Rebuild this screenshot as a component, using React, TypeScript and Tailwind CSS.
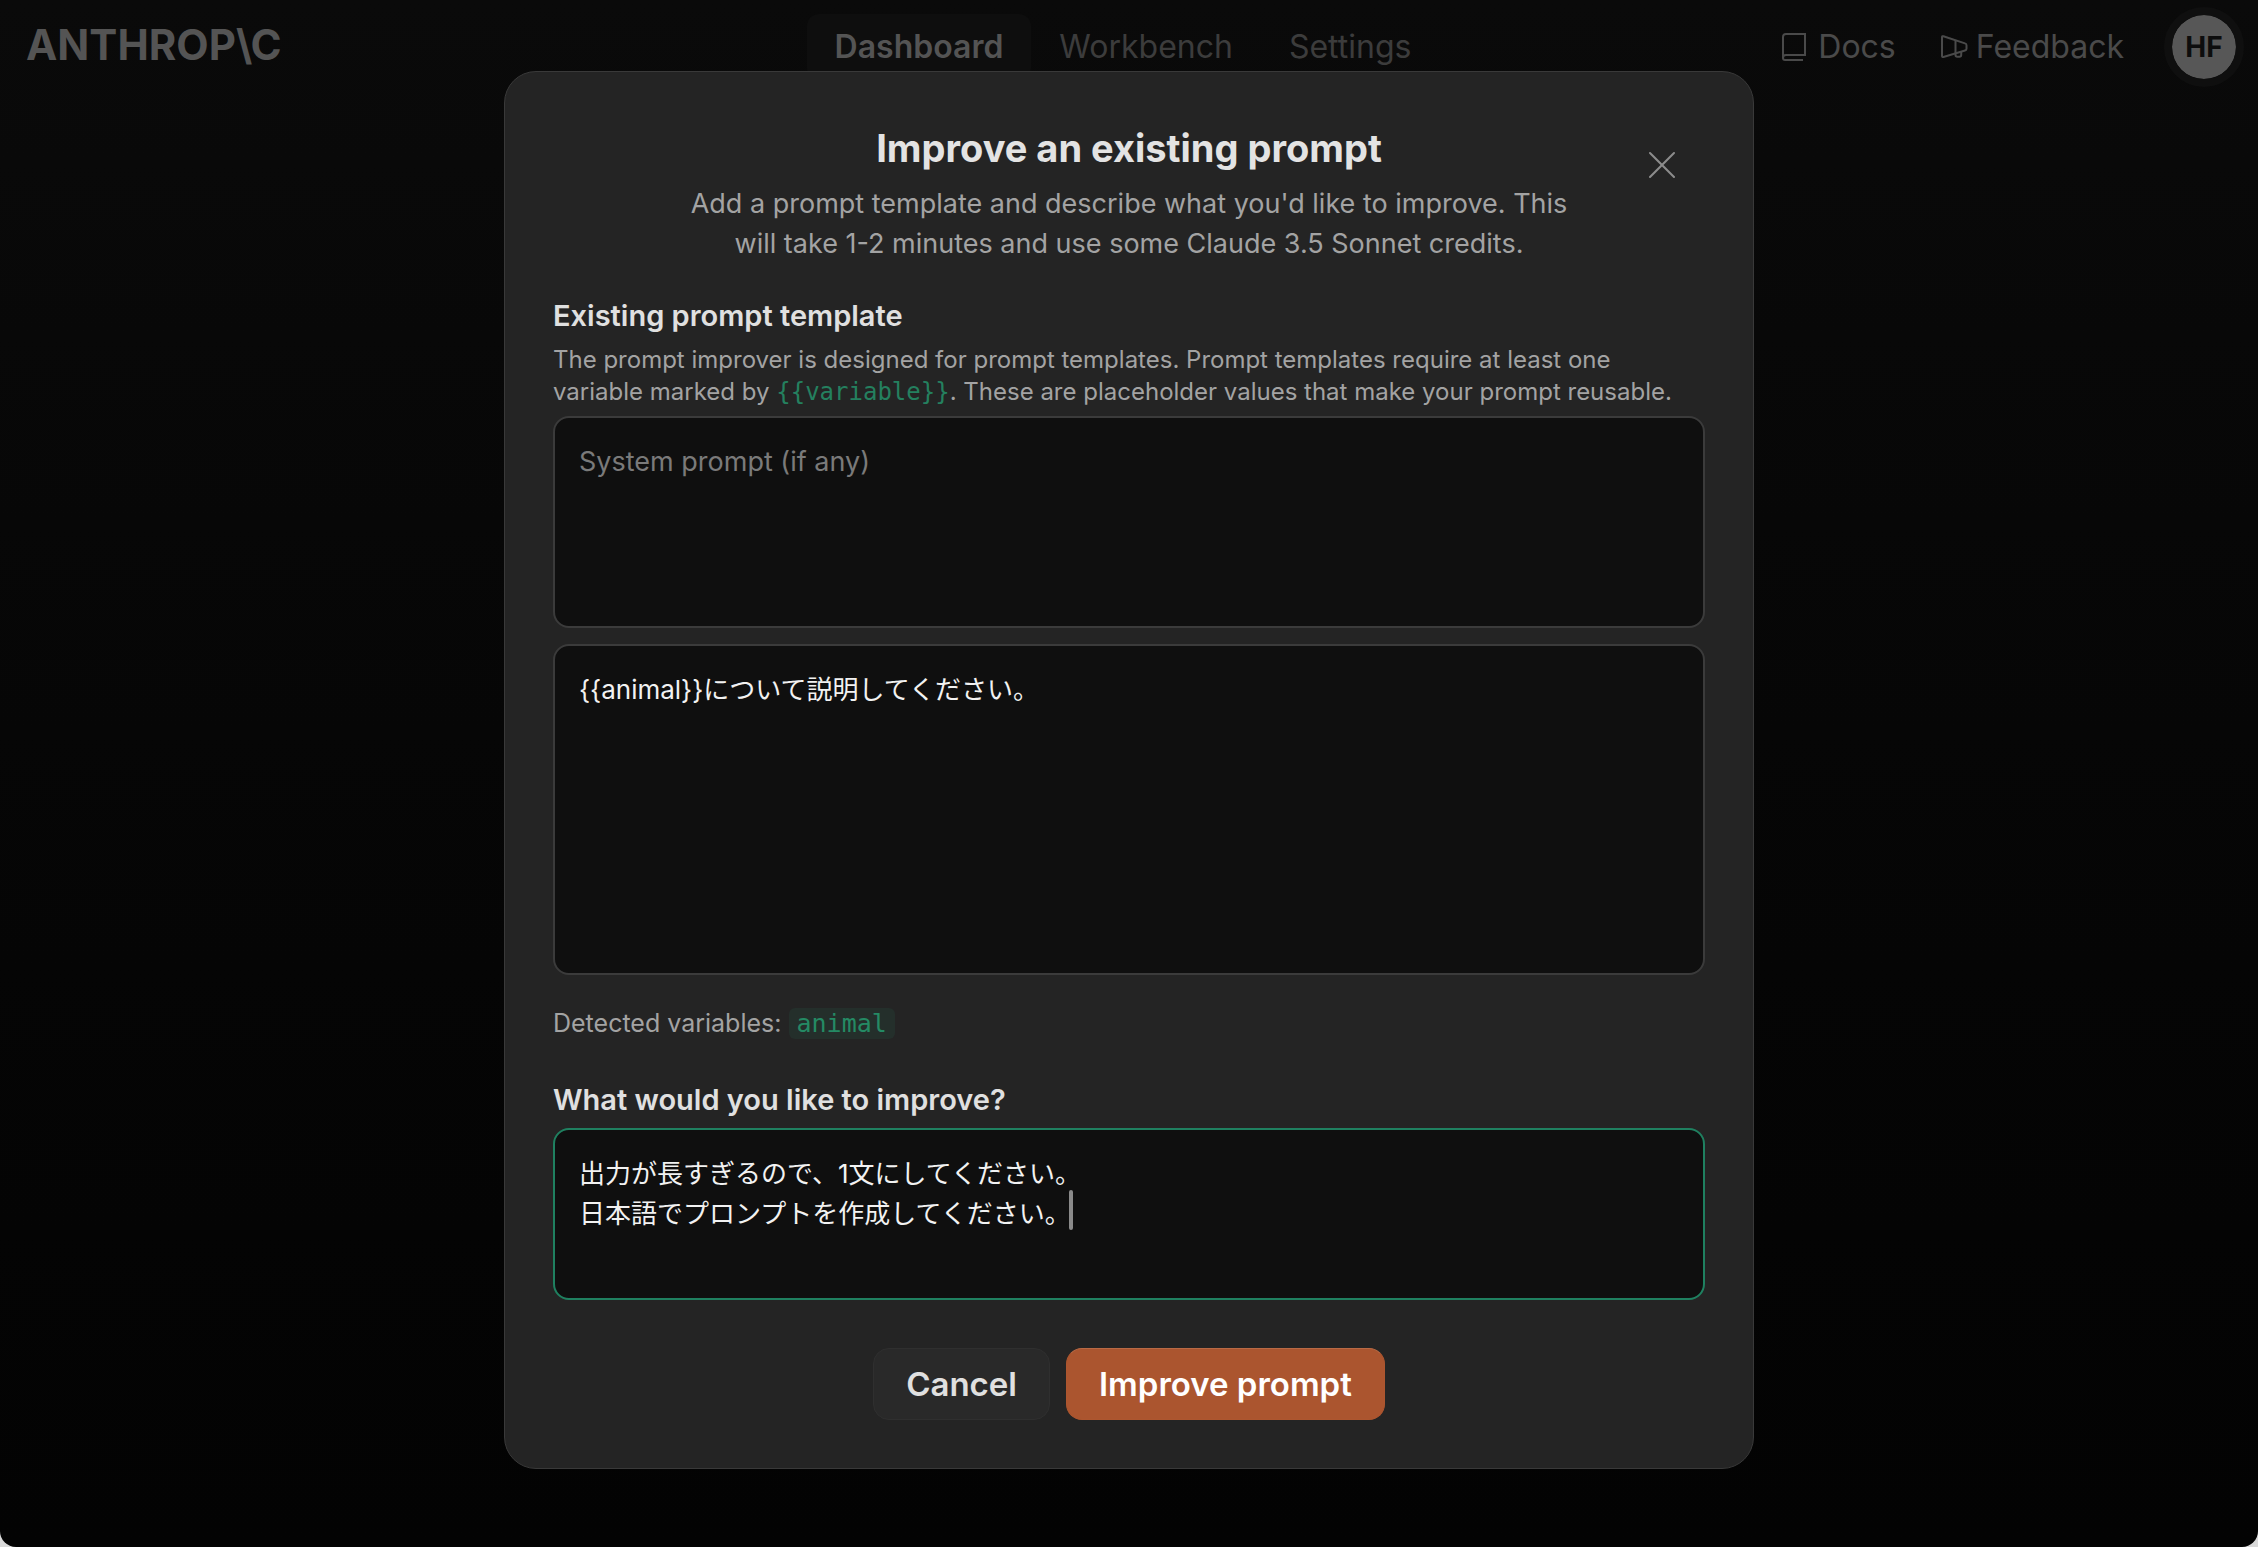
import React, { useState } from "react";

const navItems = [
  { label: "Dashboard", active: true },
  { label: "Workbench", active: false },
  { label: "Settings", active: false },
];

const boxClass =
  "block w-full resize-none overflow-hidden rounded-2xl border-2 bg-[#0f0f0f] p-6 text-[26px] leading-[40px] text-[#f2f2f2] outline-none placeholder:text-[27px] placeholder:text-[#7a7a7a]";

function BookIcon() {
  return (
    <svg width="24" height="28" viewBox="0 0 24 28" fill="none" stroke="currentColor" strokeWidth="2">
      <path d="M21 27H3a2 2 0 0 1-2-2V4a3 3 0 0 1 3-3h19v21H4a3 3 0 0 0-3 3" />
    </svg>
  );
}

function MegaphoneIcon() {
  return (
    <svg
      width="28"
      height="26"
      viewBox="0 0 28 26"
      fill="none"
      stroke="currentColor"
      strokeWidth="2"
      strokeLinejoin="round">
      <path d="M2 3v19c0 1 .6 1.300 1.400 1L25 16.500c1-.3 1.500-.8 1.500-1.800v-3.500c0-1-.5-1.500-1.500-1.800L3.400 2.200C2.600 2 2 2.200 2 3Z" />
      <path d="M15.500 6v15c0 1 .7 1.700 1.700 1.700h2.300c1 0 1.700-.7 1.700-1.700v-3.500" />
    </svg>
  );
}

function Header() {
  return (
    <header className="grid grid-cols-[1fr_auto_1fr] items-center pt-[14px] pr-[22px] pl-[26px]">
      <a href="#" className="pb-1 text-[42px] leading-[60px] font-bold text-[#545454]">
        ANTHROP\C
      </a>
      <nav className="mr-4 flex items-center text-[32px] leading-[66px]">
        {navItems.map((item) => (
          <a
            key={item.label}
            href="#"
            className={
              item.active
                ? "rounded-xl bg-[#0e0e0e] px-7 font-semibold text-[#545454]"
                : "px-7 text-[#3c3c3c]"
            }>
            {item.label}
          </a>
        ))}
      </nav>
      <div className="flex items-center justify-end text-[32px] leading-[66px] text-[#4a4a4a]">
        <a href="#" className="mr-11 flex items-center gap-3">
          <BookIcon />
          Docs
        </a>
        <a href="#" className="mr-12 flex items-center gap-2">
          <MegaphoneIcon />
          Feedback
        </a>
        <button
          aria-label="Account"
          className="flex h-16 w-16 items-center justify-center rounded-full bg-[#575757] text-[28px] font-bold text-[#0d0d0d] outline-8 outline-[#0f0f0f]">
          HF
        </button>
      </div>
    </header>
  );
}

function ImproveDialog() {
  const [system, setSystem] = useState("");
  const [template, setTemplate] = useState("{{animal}}について説明してください。");
  const [feedback, setFeedback] = useState(
    "出力が長すぎるので、1文にしてください。\n日本語でプロンプトを作成してください。"
  );

  return (
    <div
      role="dialog"
      aria-labelledby="dialog-title"
      className="relative w-full max-w-[1250px] rounded-[32px] border border-[#393939] bg-[#242424] px-12 pt-[52px] pb-12">
      <button
        aria-label="Close"
        className="absolute top-[73px] right-[71px] flex h-10 w-10 items-center justify-center text-[#8c8c8c]">
        <svg width="28" height="28" viewBox="0 0 28 28" stroke="currentColor" strokeWidth="2" strokeLinecap="round">
          <path d="M2 2l24 24M26 2L2 26" />
        </svg>
      </button>

      <div className="text-center">
        <h2 id="dialog-title" className="text-[38px] leading-[48px] font-bold text-[#e3e3e3]">
          Improve an existing prompt
        </h2>
        <p className="mx-auto mt-3 max-w-[920px] text-[27px] leading-[40px] text-[#a3a3a3]">
          Add a prompt template and describe what you'd like to improve. This
          <br />
          will take 1-2 minutes and use some Claude 3.5 Sonnet credits.
        </p>
      </div>

      <h3 className="mt-8 text-[29px] leading-[40px] font-semibold text-[#e0e0e0]">
        Existing prompt template
      </h3>
      <p className="mt-2 text-[24px] leading-[32px] text-[#a3a3a3]">
        The prompt improver is designed for prompt templates. Prompt templates require at least one
        <br />
        variable marked by{" "}
        <code className="font-['DejaVu_Sans_Mono',monospace] text-[#24805f]">{"{{variable}}"}</code>. These
        are placeholder values that make your prompt reusable.
      </p>
      <textarea
        aria-label="System prompt"
        placeholder="System prompt (if any)"
        value={system}
        onChange={(e) => setSystem(e.target.value)}
        className={`${boxClass} mt-2 h-[212px] border-[#3b3b3b]`}
      />
      <textarea
        aria-label="Prompt template"
        value={template}
        onChange={(e) => setTemplate(e.target.value)}
        className={`${boxClass} mt-4 h-[331px] border-[#3b3b3b]`}
      />

      <p className="mt-8 text-[25px] leading-[32px] text-[#a3a3a3]">
        Detected variables:{" "}
        <code className="rounded-md bg-[#242f2b] px-2 py-px font-['DejaVu_Sans_Mono',monospace] text-[25px] text-[#248a64]">
          animal
        </code>
      </p>

      <label
        htmlFor="feedback"
        className="mt-10 block text-[29px] leading-[40px] font-semibold text-[#e0e0e0]">
        What would you like to improve?
      </label>
      <div className="relative mt-2">
        <textarea
          id="feedback"
          value={feedback}
          onChange={(e) => setFeedback(e.target.value)}
          className={`${boxClass} h-[172px] border-[#1f8060]`}
        />
        <span className="absolute top-[62px] left-[516px] h-10 w-1 rounded-sm bg-[#8a8a8a]" />
      </div>

      <div className="mt-12 flex justify-center gap-4 text-[33px] leading-[40px] font-semibold">
        <button className="rounded-2xl border border-[#2f2f2f] bg-[#292929] px-8 py-[15px] text-[#e0e0e0]">
          Cancel
        </button>
        <button className="rounded-2xl border border-[#ad562f] border-t-[#b96a45] bg-[#ab552f] px-8 py-[15px] text-white">
          Improve prompt
        </button>
      </div>
    </div>
  );
}

export default function App() {
  return (
    <div className="bg-[#d9d9d9] font-['Inter','Noto_Sans_CJK_JP',sans-serif]">
      <div className="min-h-screen rounded-b-2xl bg-linear-to-b from-[#0a0a0a] to-[#030303]">
        <Header />
        <div className="fixed inset-0 flex items-start justify-center pt-[71px]">
          <ImproveDialog />
        </div>
      </div>
    </div>
  );
}
